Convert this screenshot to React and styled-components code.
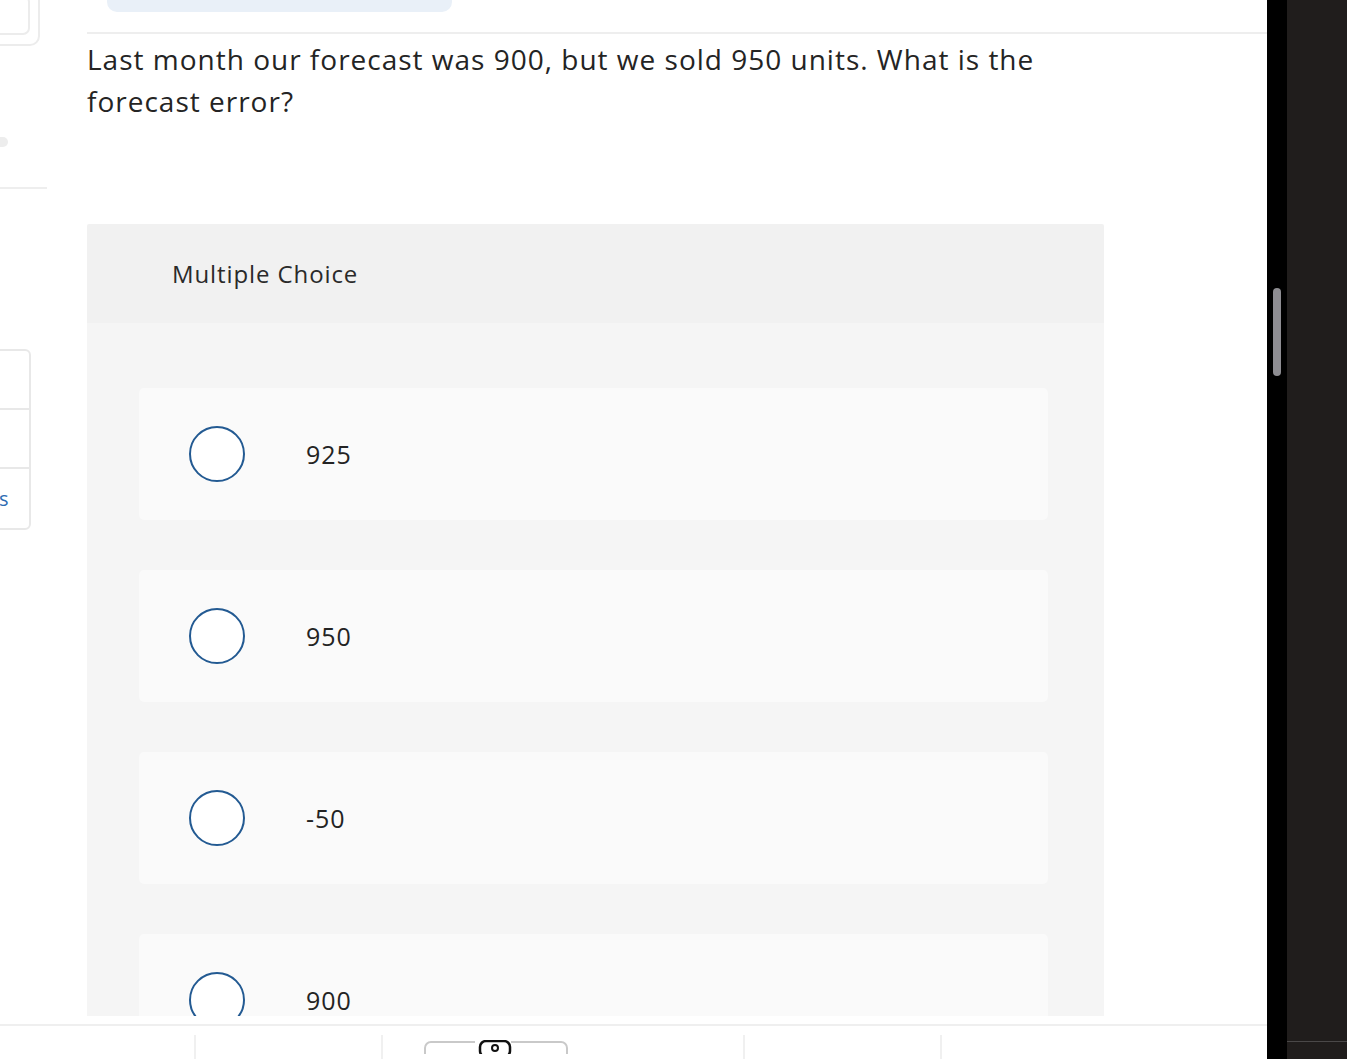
import React from 'react'
import styled, { createGlobalStyle } from 'styled-components'

const GlobalStyle = createGlobalStyle`
  html, body {
    margin: 0;
    padding: 0;
    background: #ffffff;
    overflow: hidden;
  }
  body {
    font-family: "Open Sans", Lato, "Liberation Sans", sans-serif;
    color: #222222;
  }
`

const options = ['925', '950', '-50', '900']

export default function App() {
  return (
    <>
      <GlobalStyle />
      <Screen>
        <Main>
          <Scroller>
            <Rail>
              <OuterFrame>
                <InnerFrame />
              </OuterFrame>
              <RailDot />
              <RailRule />
              <RailList>
                <RailCell />
                <RailCell />
                <RailCell $last>s</RailCell>
              </RailList>
            </Rail>
            <Content>
              <TopPill />
              <TopRule />
              <Question>
                Last month our forecast was 900, but we sold 950 units. What is the
                <br />
                forecast error?
              </Question>
              <Card>
                <CardHeader>Multiple Choice</CardHeader>
                <CardBody>
                  {options.map((o) => (
                    <Option key={o}>
                      <Radio />
                      <OptionText>{o}</OptionText>
                    </Option>
                  ))}
                </CardBody>
              </Card>
            </Content>
          </Scroller>
          <Footer>
            <FooterCell $w={194} />
            <FooterCell $w={187} $line />
            <FooterCell $w={362} $line>
              <ToolIcon>
                <svg width="146" height="14" viewBox="0 0 146 14">
                  <path d="M2 14 V8 a6 6 0 0 1 6 -6 H52" fill="none" stroke="#c9c9c9" strokeWidth="2" />
                  <path d="M88 2 H138 a6 6 0 0 1 6 6 V14" fill="none" stroke="#c9c9c9" strokeWidth="2" />
                  <rect x="57" y="1" width="30" height="16" rx="6" fill="none" stroke="#111" strokeWidth="2.5" />
                  <circle cx="72" cy="8" r="3" fill="none" stroke="#111" strokeWidth="2" />
                </svg>
              </ToolIcon>
            </FooterCell>
            <FooterCell $w={197} $line />
            <FooterCell $w={327} $line />
          </Footer>
        </Main>
        <Track>
          <Thumb />
        </Track>
        <Side>
          <SideRule />
        </Side>
      </Screen>
    </>
  )
}

const Screen = styled.div`
  display: flex;
  width: 1347px;
  height: 1059px;
  overflow: hidden;
`

const Main = styled.div`
  width: 1267px;
  display: flex;
  flex-direction: column;
  background: #ffffff;
`

const Scroller = styled.div`
  display: flex;
  align-items: flex-start;
  height: 1016px;
  flex-shrink: 0;
  overflow: hidden;
`

const Rail = styled.div`
  width: 47px;
  flex-shrink: 0;
  display: flex;
  flex-direction: column;
`

const OuterFrame = styled.div`
  margin: -20px 0 0 -30px;
  width: 70px;
  height: 66px;
  border: 2px solid #ececec;
  border-radius: 10px;
  box-sizing: border-box;
  display: flex;
  justify-content: flex-end;
  align-items: flex-end;
  padding: 0 8px 9px 0;
`

const InnerFrame = styled.div`
  width: 50px;
  height: 40px;
  border: 2px solid #ececec;
  border-radius: 7px;
  box-sizing: border-box;
`

const RailDot = styled.div`
  margin: 91px 0 0 -12px;
  width: 20px;
  height: 10px;
  border-radius: 5px;
  background: #ededed;
`

const RailRule = styled.div`
  margin-top: 40px;
  height: 2px;
  background: #eeeeee;
`

const RailList = styled.div`
  margin: 160px 0 0 -20px;
  width: 51px;
  border: 2px solid #e8e8e8;
  border-radius: 0 6px 6px 0;
  box-sizing: border-box;
`

const RailCell = styled.div`
  height: 59px;
  border-bottom: ${(p) => (p.$last ? 'none' : '2px solid #e8e8e8')};
  box-sizing: border-box;
  padding-left: 17px;
  display: flex;
  align-items: center;
  color: #2d6cb3;
  font-size: 20px;
`

const Content = styled.div`
  margin-left: 40px;
  flex: 1;
  display: flex;
  flex-direction: column;
  & > * {
    flex-shrink: 0;
  }
`

const TopPill = styled.div`
  margin: -10px 0 0 20px;
  width: 345px;
  height: 22px;
  border-radius: 0 0 10px 10px;
  background: #e9f0f8;
`

const TopRule = styled.div`
  margin-top: 20px;
  height: 2px;
  background: #eeeeee;
`

const Question = styled.p`
  margin: 4px 0 0;
  font-size: 28px;
  line-height: 42px;
  letter-spacing: 1px;
  color: #242424;
`

const Card = styled.div`
  margin-top: 102px;
  width: 1017px;
  display: flex;
  flex-direction: column;
`

const CardHeader = styled.div`
  height: 99px;
  background: #f1f1f1;
  display: flex;
  align-items: center;
  padding-left: 85px;
  font-size: 24px;
  letter-spacing: 0.9px;
  color: #2a2a2a;
  border-radius: 2px 2px 0 0;
`

const CardBody = styled.div`
  background: #f5f5f5;
  padding: 65px 56px 40px 52px;
  display: flex;
  flex-direction: column;
  gap: 50px;
`

const Option = styled.div`
  height: 132px;
  background: #fafafa;
  border-radius: 5px;
  display: flex;
  align-items: center;
  padding-left: 50px;
`

const Radio = styled.div`
  width: 56px;
  height: 56px;
  border-radius: 50%;
  border: 2px solid #235a92;
  background: #ffffff;
  box-sizing: border-box;
  flex-shrink: 0;
`

const OptionText = styled.span`
  margin-left: 61px;
  font-size: 25px;
  letter-spacing: 1px;
  color: #232323;
`

const Footer = styled.div`
  margin-top: 8px;
  border-top: 2px solid #efefef;
  flex: 1;
  display: flex;
  padding-top: 9px;
`

const FooterCell = styled.div`
  width: ${(p) => p.$w}px;
  flex-shrink: 0;
  border-left: ${(p) => (p.$line ? '2px solid #f0f0f0' : 'none')};
  box-sizing: border-box;
`

const ToolIcon = styled.div`
  margin: 5px 0 0 40px;
  line-height: 0;
`

const Track = styled.div`
  width: 20px;
  background: #000000;
  display: flex;
  justify-content: center;
  align-items: flex-start;
  padding-top: 288px;
  box-sizing: border-box;
`

const Thumb = styled.div`
  width: 8px;
  height: 88px;
  border-radius: 4px;
  background: #8e8d92;
`

const Side = styled.div`
  flex: 1;
  background: #201d1c;
  display: flex;
  flex-direction: column;
  justify-content: flex-end;
`

const SideRule = styled.div`
  height: 1px;
  background: #4a4848;
  margin-bottom: 17px;
`
